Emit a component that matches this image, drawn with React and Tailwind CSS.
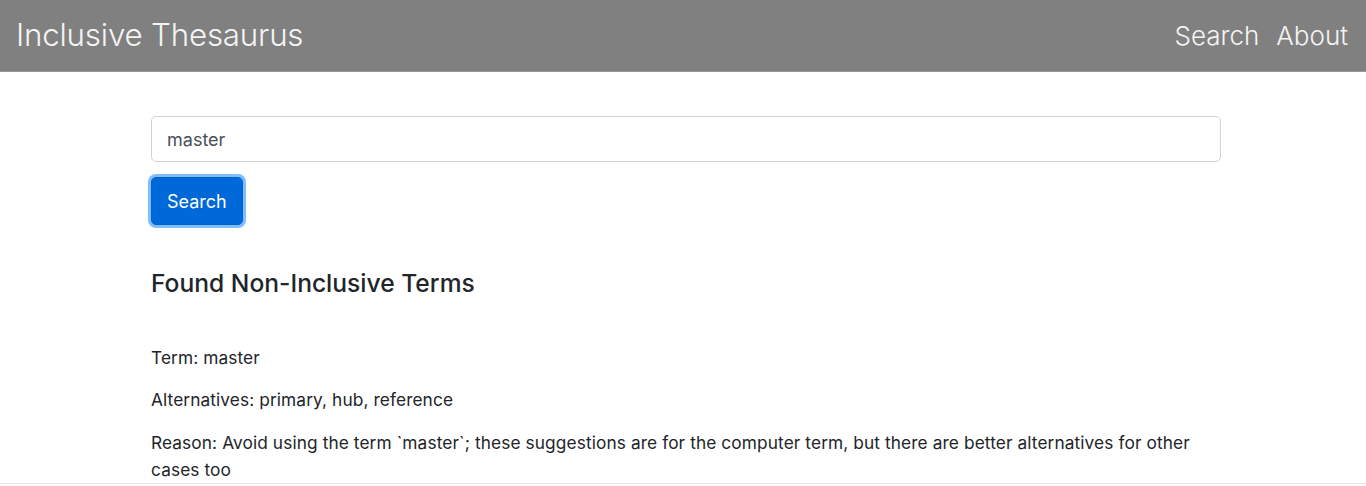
export default function App() {
  return (
    <div className="min-h-screen bg-white text-[#212529]" style={{ fontFamily: 'Inter, "Noto Sans", sans-serif' }}>
      {/* Navbar */}
      <nav className="flex h-[72px] items-center justify-between border-b border-[#999] bg-[#808080] pl-4 pr-[18px]">
        <a className="text-[31.3px] font-light tracking-[-0.2px] text-[#f4f4f4]">Inclusive Thesaurus</a>
        <div className="flex items-center gap-[17px] text-[26px] font-light text-[#f4f4f4]">
          <a>Search</a>
          <a>About</a>
        </div>
      </nav>

      {/* Content */}
      <main className="ml-[151px] w-[1070px] pt-[44px]">
        <input
          defaultValue="master"
          className="block h-[46px] w-full rounded-[5px] border border-[#ced4da] px-[15px] text-[18px] text-[#495057] outline-none"
        />
        <button className="mt-[15px] h-[48px] rounded-[5px] border border-[#0062cc] bg-[#0069d9] px-[15px] text-[18px] text-white ring-[3px] ring-[#80bdff]">
          Search
        </button>

        <h4 className="mt-[43px] text-[24.6px] font-medium leading-[30px]">Found Non-Inclusive Terms</h4>

        <div className="mt-[46px] text-[17.3px] leading-[27px] tracking-[0.1px]">
          <p className="mb-[15px]">Term: master</p>
          <p className="mb-[16px]">Alternatives: primary, hub, reference</p>
          <p>
            Reason: Avoid using the term `master`; these suggestions are for the computer term, but there are better
            alternatives for other cases too
          </p>
        </div>
      </main>
      <div className="border-t border-[#e6e6e6]" />
    </div>
  );
}
